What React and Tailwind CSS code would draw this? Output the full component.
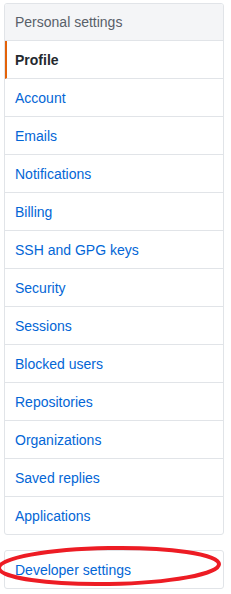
import React from "react";

const items = [
  "Account",
  "Emails",
  "Notifications",
  "Billing",
  "SSH and GPG keys",
  "Security",
  "Sessions",
  "Blocked users",
  "Repositories",
  "Organizations",
  "Saved replies",
  "Applications",
];

export default function App() {
  return (
    <div className="bg-white w-[231px] h-[594px] pt-[3px] pl-[4px] overflow-hidden" style={{ fontFamily: '"Liberation Sans", Arial, sans-serif' }}>
      <div className="w-[220px] border border-[#e1e4e8] rounded-[3px] overflow-hidden">
        <div className="h-[37px] bg-[#f4f5f7] border-b border-[#e1e4e8] flex items-center pl-[10px] pt-[1px] text-[14px] text-[#586069]">
          Personal settings
        </div>
        <div className="h-[38px] border-b border-[#e1e4e8] border-l-2 border-l-[#e36209] flex items-center pl-[8px] pt-[1px] text-[14px] font-bold text-[#24292e]">
          Profile
        </div>
        {items.map((t, i) => (
          <div
            key={t}
            className={`flex items-center pl-[10px] pt-[1px] text-[14px] text-[#0366d6] ${i < items.length - 1 ? "h-[38px] border-b border-[#e1e4e8]" : "h-[37px]"}`}
          >
            {t}
          </div>
        ))}
      </div>
      <div className="relative mt-[15px] w-[220px]">
        <div className="h-[39px] border border-[#e1e4e8] rounded-[3px] flex items-center pl-[10px] pt-[1px] text-[14px] text-[#0366d6]">
          Developer settings
        </div>
        <svg className="absolute left-[-12px] top-[-6px] pointer-events-none overflow-visible" width="244" height="46" viewBox="0 0 244 46">
          <ellipse cx="117" cy="22" rx="110" ry="18" fill="none" stroke="#ed1c24" strokeWidth="4" transform="rotate(-1 117 22)" />
        </svg>
      </div>
    </div>
  );
}
